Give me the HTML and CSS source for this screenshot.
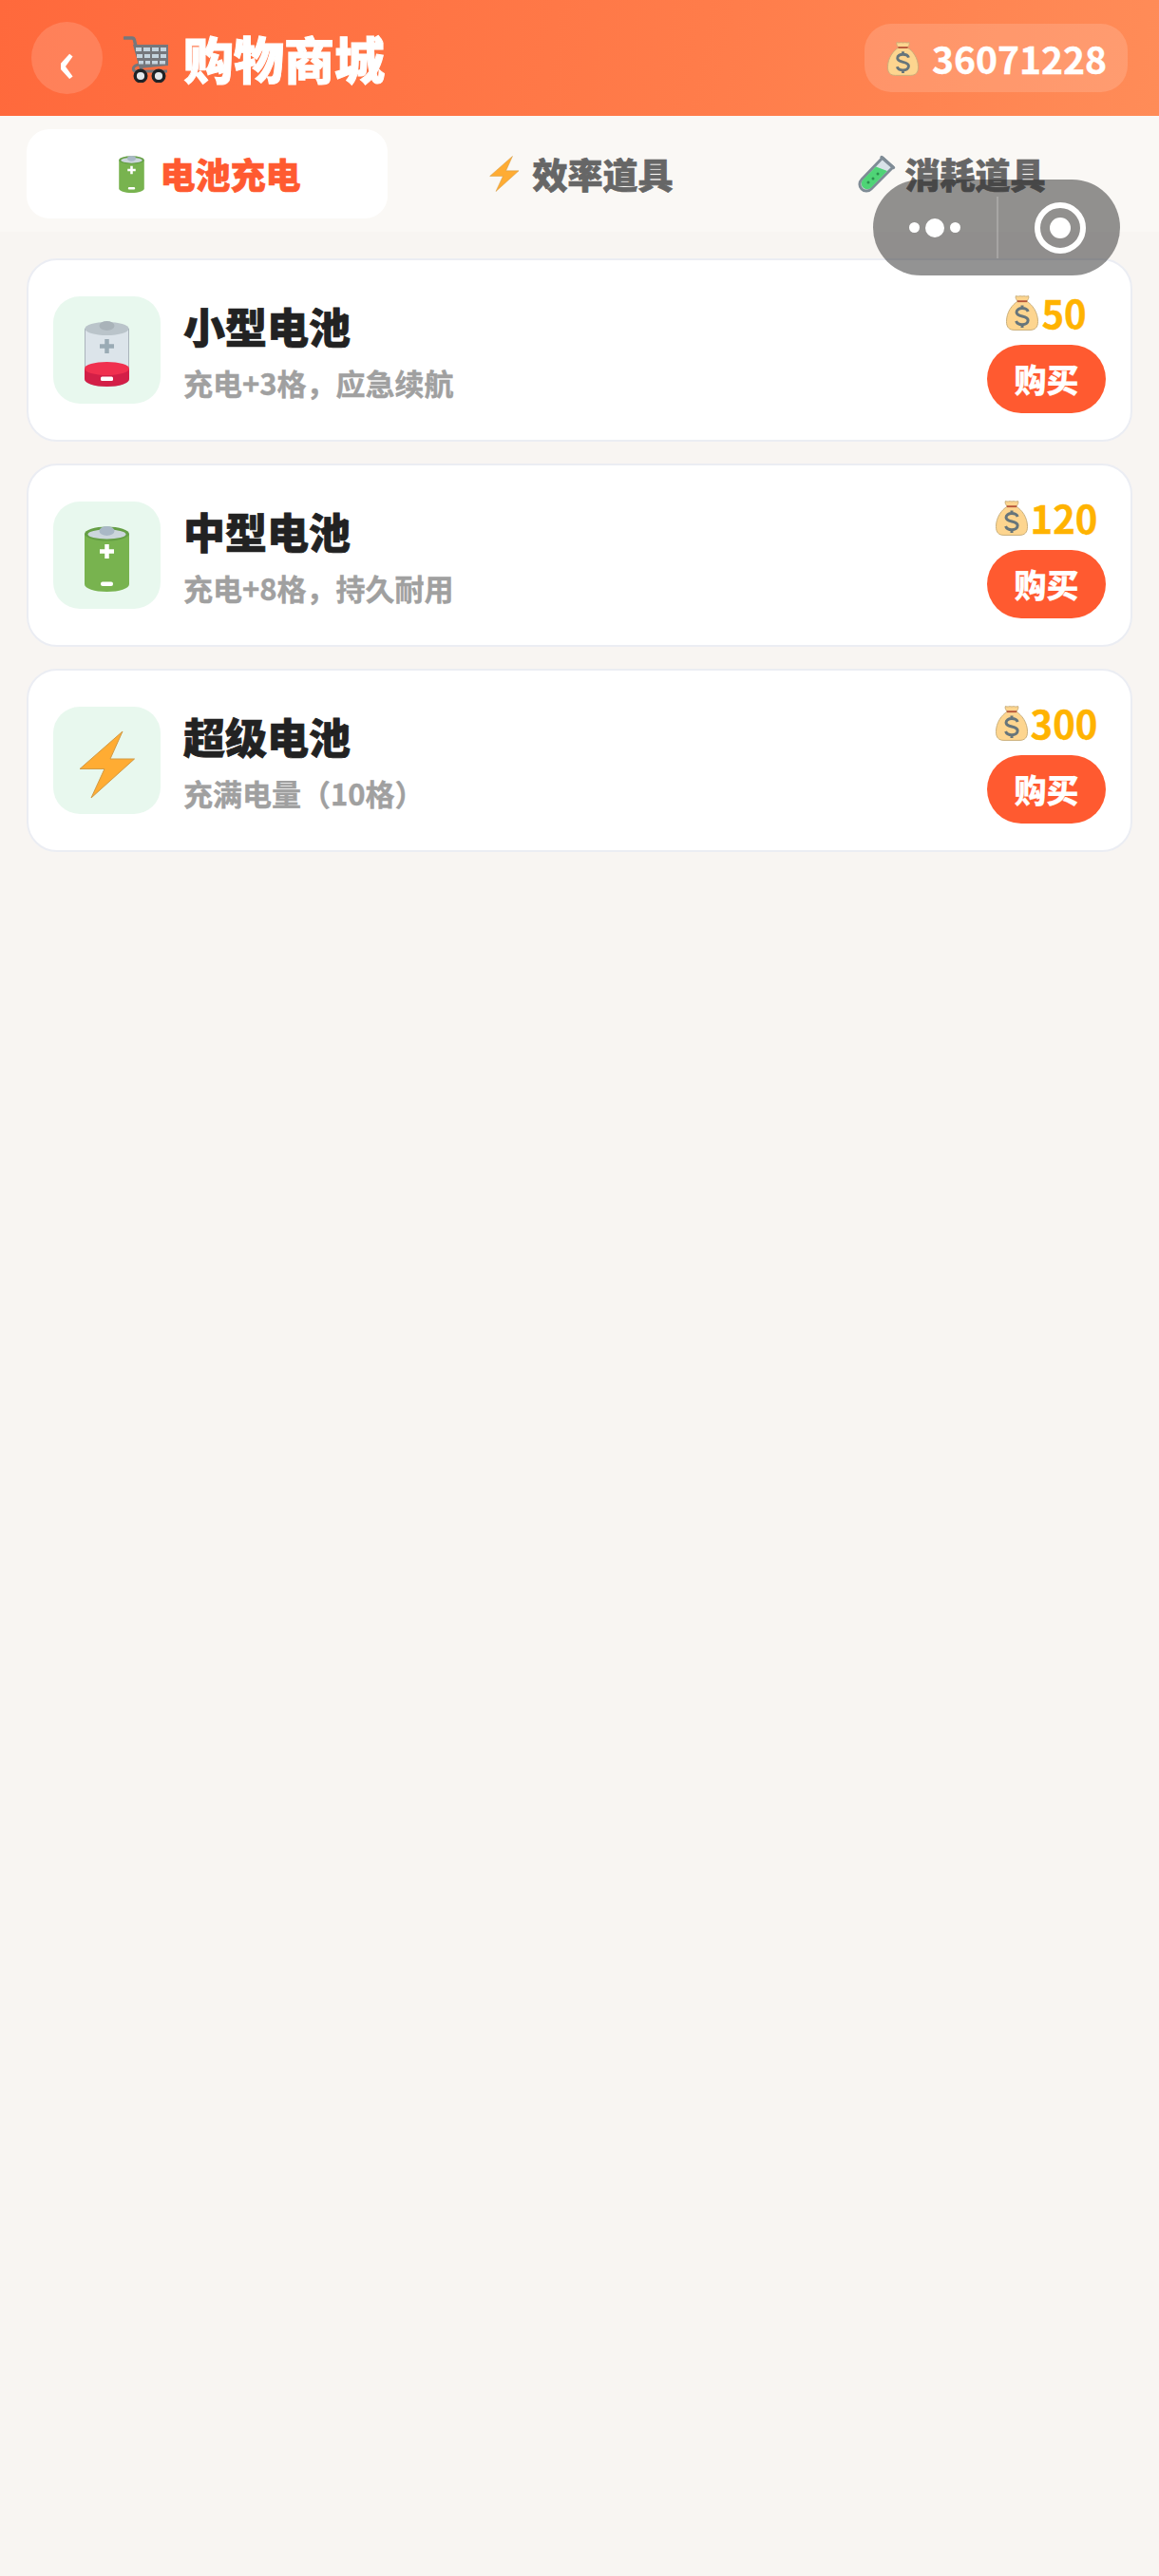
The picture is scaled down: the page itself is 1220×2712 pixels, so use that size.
FILE: index.html
```html
<!DOCTYPE html>
<html lang="zh">
<head>
<meta charset="utf-8">
<title>购物商城</title>
<link rel="stylesheet" href="styles.css">
</head>
<body>
<svg class="defs" width="0" height="0" aria-hidden="true">
  <symbol id="bag" viewBox="0 0 36 40">
    <path d="M11 1.500c2.500 1.400 4-.6 7 .5 3-1.100 4.500.9 7-.5 1 2.200-.5 4.200-2 6 6 3.500 12.500 12 12.500 22.500 0 6.500-3 9.500-9 9.500H9.500c-6 0-9-3-9-9.500C.5 19.500 7 11 13 7.500c-1.500-1.800-3-3.800-2-6z" fill="#fdd58f" stroke="#c7ac78" stroke-width="1"/>
    <path d="M12.500 7.500h11" stroke="#b5543a" stroke-width="2"/>
    <path d="M24.500 19c-.8-2.600-3.200-3.700-6.500-3.700-3.600 0-6.300 1.700-6.300 4.500 0 6 12.800 3 12.800 9 0 3-2.900 4.700-6.500 4.700-3.300 0-5.800-1.200-6.800-3.900M18 12v3.500M18 33.500V37" fill="none" stroke="#66757b" stroke-width="3.200"/>
  </symbol>
  <symbol id="bolt" viewBox="0 0 60 72">
    <path d="M46 1 33 30h25.500L13 71l14-30.500H1z" fill="#ffac33" stroke="#d19a45" stroke-width="1" stroke-linejoin="round"/>
  </symbol>
  <symbol id="green-battery" viewBox="0 0 47 69">
    <path d="M0 8v53c0 4.500 10.500 8 23.500 8S47 65.500 47 61V8z" fill="#78b34f"/>
    <ellipse cx="23.500" cy="8" rx="23.500" ry="7.500" fill="#659f45"/>
    <ellipse cx="23.500" cy="8.500" rx="20" ry="5" fill="#ccd6dc"/>
    <ellipse cx="23.500" cy="5" rx="8" ry="5" fill="#a9b8c6"/>
    <path d="M23.500 19v15M16 26.500h15" stroke="#fff" stroke-width="4.500"/>
    <rect x="17" y="58.500" width="13" height="4.500" rx="2" fill="#fff"/>
  </symbol>
</svg>

<header class="topbar">
  <button class="back" type="button">‹</button>
  <svg class="cart" viewBox="0 0 47 50" aria-hidden="true">
    <path d="M1 3h8c1.500 0 2 .6 2.400 2l8 33" fill="none" stroke="#75777c" stroke-width="3.400" stroke-linecap="round"/>
    <path d="M10 10h37v22l-30 3z" fill="#75777c"/>
    <g fill="#c5d4de">
      <rect x="13" y="13" width="6" height="4"/><rect x="21" y="13" width="7" height="4"/><rect x="30" y="13" width="7" height="4"/><rect x="39" y="13" width="6" height="4"/>
      <rect x="14" y="20" width="6" height="4"/><rect x="22" y="20" width="6" height="4"/><rect x="30" y="20" width="7" height="4"/><rect x="39" y="20" width="6" height="4"/>
      <rect x="16" y="27" width="5" height="3.500"/><rect x="23" y="27" width="5" height="3.500"/><rect x="30" y="27" width="6" height="3.500"/><rect x="38" y="27" width="6" height="3.500"/>
    </g>
    <path d="M46 38H13c-4 0-4 -6 3 -7" fill="none" stroke="#75777c" stroke-width="3"/>
    <circle cx="18" cy="43" r="5.800" fill="#e3e8ec" stroke="#1f2327" stroke-width="3.400"/>
    <circle cx="37" cy="43" r="5.800" fill="#e3e8ec" stroke="#1f2327" stroke-width="3.400"/>
  </svg>
  <h1 class="title">购物商城</h1>
  <div class="balance">
    <svg class="balance-bag"><use href="#bag"/></svg>
    <span>36071228</span>
  </div>
</header>

<nav class="tabs">
  <div class="tab tab-active">
    <span class="tab-slot"><svg class="tab-battery"><use href="#green-battery"/></svg></span>
    <span>电池充电</span>
  </div>
  <div class="tab">
    <span class="tab-slot"><svg class="tab-bolt"><use href="#bolt"/></svg></span>
    <span>效率道具</span>
  </div>
  <div class="tab">
    <span class="tab-slot"><svg class="tab-tube" viewBox="0 0 40 40" aria-hidden="true">
      <path d="M26 3 37 13 14 36a7 7 0 0 1-10-10z" fill="#d8e2e8" stroke="#7f8c96" stroke-width="3" stroke-linejoin="round"/>
      <path d="M19 12.500 31 17 14 34.500a6 6 0 0 1-8.500-8.500z" fill="#4fd476"/>
      <circle cx="11" cy="29" r="1.500" fill="#2c8f4e"/><circle cx="16" cy="25" r="1.500" fill="#2c8f4e"/><circle cx="21" cy="20" r="1.500" fill="#2c8f4e"/>
      <path d="M25 2.500 37.500 13.500" stroke="#7f8c96" stroke-width="3.400" stroke-linecap="round"/>
    </svg></span>
    <span>消耗道具</span>
  </div>
</nav>

<main class="list">
  <article class="card">
    <div class="thumb">
      <svg class="thumb-battery" viewBox="0 0 47 69" aria-hidden="true">
        <path d="M.5 8v53c0 4.500 10.500 7.500 23 7.500s23-3 23-7.500V8z" fill="#dce4ea" stroke="#aab4bb"/>
        <ellipse cx="23.500" cy="8" rx="23" ry="7" fill="#bac4ca"/>
        <ellipse cx="23.500" cy="5" rx="8" ry="5" fill="#a9b3b9"/>
        <path d="M23.500 19v15M16 26.500h15" stroke="#9aabb5" stroke-width="4.500"/>
        <path d="M0 50v11c0 4.500 10.500 8 23.500 8S47 65.500 47 61V50z" fill="#d31f47"/>
        <ellipse cx="23.500" cy="50" rx="23.500" ry="7" fill="#f0304f"/>
        <rect x="17" y="58.500" width="13" height="4.500" rx="1.500" fill="#fff"/>
      </svg>
    </div>
    <div class="info">
      <h2 class="name">小型电池</h2>
      <p class="desc">充电+3格，应急续航</p>
    </div>
    <div class="buy">
      <div class="price"><svg class="price-bag"><use href="#bag"/></svg><span>50</span></div>
      <button class="buy-btn" type="button">购买</button>
    </div>
  </article>

  <article class="card">
    <div class="thumb">
      <svg class="thumb-battery"><use href="#green-battery"/></svg>
    </div>
    <div class="info">
      <h2 class="name">中型电池</h2>
      <p class="desc">充电+8格，持久耐用</p>
    </div>
    <div class="buy">
      <div class="price"><svg class="price-bag"><use href="#bag"/></svg><span>120</span></div>
      <button class="buy-btn" type="button">购买</button>
    </div>
  </article>

  <article class="card">
    <div class="thumb">
      <svg class="thumb-bolt"><use href="#bolt"/></svg>
    </div>
    <div class="info">
      <h2 class="name">超级电池</h2>
      <p class="desc">充满电量（10格）</p>
    </div>
    <div class="buy">
      <div class="price"><svg class="price-bag"><use href="#bag"/></svg><span>300</span></div>
      <button class="buy-btn" type="button">购买</button>
    </div>
  </article>
</main>

<div class="capsule">
  <div class="capsule-dots">
    <i class="dot"></i><i class="dot dot-big"></i><i class="dot"></i>
  </div>
  <i class="capsule-line"></i>
  <div class="capsule-target"><i class="target-core"></i></div>
</div>
</body>
</html>
```

FILE: styles.css
```css
* { box-sizing: border-box; }

html, body {
  margin: 0;
  padding: 0;
}

body {
  position: relative;
  min-height: 2712px;
  background: #f8f5f2;
  font-family: "Noto Sans CJK SC", "Noto Sans", sans-serif;
  font-weight: 700;
  overflow: hidden;
}

.defs { position: absolute; }

.topbar {
  display: flex;
  align-items: center;
  height: 122px;
  padding: 0 33px;
  background: linear-gradient(100deg, #ff693c 0%, #ff7c4a 60%, #ff8c58 100%);
}

.back {
  flex: none;
  width: 75px;
  height: 76px;
  padding: 0;
  border: 0;
  border-radius: 50%;
  background: rgba(255, 255, 255, 0.15);
  color: #fff;
  font: 700 60px/64px "Noto Sans CJK SC", sans-serif;
}

.cart {
  flex: none;
  width: 47px;
  height: 50px;
  margin: 2px 16px 0 22px;
}

.title {
  flex: 1;
  margin: 0;
  color: #fff;
  font-size: 53px;
  font-weight: 900;
  line-height: 64px;
  -webkit-text-stroke: 1px #fff;
}

.balance {
  display: flex;
  align-items: center;
  gap: 14px;
  width: 277px;
  height: 72px;
  padding: 0 24px;
  border-radius: 28px;
  background: rgba(255, 255, 255, 0.15);
  color: #fff;
  font-size: 39px;
  line-height: 48px;
  -webkit-text-stroke: 0.4px #fff;
}

.balance-bag { flex: none; width: 33px; height: 39px; }

.tabs {
  display: flex;
  gap: 12px;
  height: 122px;
  padding: 14px 28px;
  background: #faf8f5;
}

.tab {
  display: flex;
  flex: 1;
  align-items: center;
  justify-content: center;
  gap: 8px;
  height: 94px;
  padding-right: 3px;
  border-radius: 24px;
  color: #666;
  font-size: 37px;
  font-weight: 900;
  line-height: 46px;
  -webkit-text-stroke: 0.7px #666;
}

.tab-active {
  background: #fff;
  color: #ff5a30;
  -webkit-text-stroke: 0.7px #ff5a30;
}

.tab-slot {
  display: flex;
  flex: none;
  align-items: center;
  justify-content: center;
  width: 44px;
}

.tab-battery { width: 27px; height: 39px; }
.tab-bolt { width: 32px; height: 38px; }
.tab-tube { width: 40px; height: 40px; }

.list {
  display: flex;
  flex-direction: column;
  gap: 23px;
  padding: 28px 28px 0;
}

.card {
  display: flex;
  align-items: center;
  height: 193px;
  padding: 0 26px;
  border: 2px solid #ebedf3;
  border-radius: 32px;
  background: #fff;
}

.thumb {
  display: flex;
  flex: none;
  align-items: center;
  justify-content: center;
  width: 113px;
  height: 113px;
  margin-right: 24px;
  padding-top: 8px;
  border-radius: 28px;
  background: #e8f8ee;
}

.thumb-battery { width: 47px; height: 69px; }
.thumb-bolt { width: 60px; height: 72px; }

.info { flex: 1; }

.name {
  margin: 0;
  color: #222;
  font-size: 44px;
  font-weight: 900;
  line-height: 58px;
  -webkit-text-stroke: 0.7px #222;
}

.desc {
  margin: 10px 0 0;
  color: #a0a0a0;
  font-size: 31px;
  line-height: 42px;
  -webkit-text-stroke: 0.4px #a0a0a0;
}

.buy {
  display: flex;
  flex-direction: column;
  align-items: center;
  gap: 6px;
  padding-bottom: 2px;
}

.price {
  display: flex;
  align-items: center;
  height: 56px;
  color: #ffb300;
  font-size: 40px;
  line-height: 56px;
  -webkit-text-stroke: 0.4px #ffb300;
}

.price-bag { width: 34px; height: 40px; margin-right: 3px; }

.buy-btn {
  width: 125px;
  height: 72px;
  padding: 0;
  border: 0;
  border-radius: 36px;
  background: #ff5a30;
  color: #fff;
  font: 900 34px/44px "Noto Sans CJK SC", sans-serif;
  -webkit-text-stroke: 0.2px #fff;
}

.capsule {
  position: absolute;
  top: 189px;
  left: 919px;
  display: flex;
  align-items: center;
  width: 260px;
  height: 101px;
  border-radius: 51px;
  background: rgba(40, 40, 40, 0.5);
}

.capsule-dots {
  display: flex;
  align-items: center;
  justify-content: center;
  gap: 6px;
  width: 130px;
}

.dot {
  width: 11px;
  height: 11px;
  border-radius: 50%;
  background: #fff;
}

.dot-big { width: 20px; height: 20px; }

.capsule-line {
  width: 2px;
  height: 65px;
  background: rgba(255, 255, 255, 0.2);
}

.capsule-target {
  display: flex;
  align-items: center;
  justify-content: center;
  width: 54px;
  height: 54px;
  margin-left: 38px;
  border: 6px solid #fff;
  border-radius: 50%;
}

.target-core {
  width: 22px;
  height: 22px;
  border-radius: 50%;
  background: #fff;
}
```
